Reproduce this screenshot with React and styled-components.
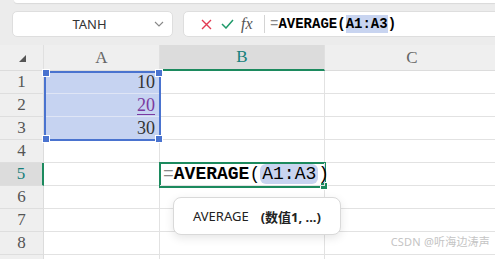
import React from "react";
import styled, { createGlobalStyle } from "styled-components";

const Global = createGlobalStyle`
  html, body {
    margin: 0;
    padding: 0;
    background: #ececec;
    overflow: hidden;
  }
  body {
    font-family: "Noto Sans", "Noto Sans CJK SC", sans-serif;
  }
`;

const Page = styled.div`
  width: 495px;
  height: 259px;
  position: relative;
  overflow: hidden;
  background: #ececec;
`;

const TopPanel = styled.div`
  height: 3px;
  margin-left: 14px;
  background: #fff;
  border-bottom-left-radius: 4px;
  box-shadow: 0 1px 1px rgba(0, 0, 0, 0.08);
`;

const Toolbar = styled.div`
  display: flex;
  gap: 10px;
  padding: 8px 0 0 12px;
  height: 34px;
  box-sizing: border-box;
`;

const NameBox = styled.div`
  width: 161px;
  height: 26px;
  box-sizing: border-box;
  background: #fff;
  border: 1px solid #dedede;
  border-radius: 5px;
  display: flex;
  align-items: center;
  padding: 0 8px 0 0;
  font-size: 13px;
  color: #333;
`;

const NameText = styled.span`
  flex: 1;
  text-align: center;
  padding-left: 12px;
`;

const FormulaBox = styled.div`
  flex: 1;
  height: 26px;
  margin-right: -12px;
  box-sizing: border-box;
  background: #fff;
  border: 1px solid #dedede;
  border-radius: 5px;
  display: flex;
  align-items: center;
  padding-left: 12px;
`;

const IconBtn = styled.span`
  width: 21px;
  display: flex;
  align-items: center;
  justify-content: center;
`;

const Fx = styled.span`
  font-family: "Liberation Serif", serif;
  font-style: italic;
  font-size: 16px;
  color: #555;
  margin-left: 3px;
  width: 20px;
`;

const Separator = styled.span`
  width: 1px;
  height: 18px;
  background: #d4d4d4;
  margin: 0 5px 0 3px;
`;

const FormulaText = styled.span`
  font-family: "Liberation Mono", monospace;
  font-size: 14px;
  font-weight: 700;
  color: #000;
  display: flex;
  align-items: center;
  height: 18px;
`;

const Eq = styled.span`
  color: #888;
  font-weight: 400;
`;

const Fn = styled.span`
  font-weight: 700;
`;

const RefHi = styled.span`
  background: #c8d4f0;
  padding: 1px 0;
`;

const Sheet = styled.div`
  margin-top: 8px;
  display: grid;
  grid-template-columns: 44px 116px 165px 175px;
  grid-template-rows: 26px repeat(9, 23px);
  position: relative;
  background: #fff;
`;

const ColHead = styled.div`
  background: ${(p) => (p.$active ? "#dcdcdc" : "#efefef")};
  color: ${(p) => (p.$active ? "#16807a" : "#666")};
  border-right: 1px solid #e0e0e0;
  border-bottom: ${(p) => (p.$active ? "2px solid #1c8a5e" : "1px solid #dcdcdc")};
  box-sizing: border-box;
  display: flex;
  align-items: center;
  justify-content: center;
  font-family: "Liberation Serif", serif;
  font-size: 17px;
`;

const Corner = styled(ColHead)`
  justify-content: flex-start;
  align-items: flex-start;
  padding: 10px 0 0 19px;
`;

const RowHead = styled.div`
  background: ${(p) => (p.$active ? "#dcdcdc" : "#efefef")};
  color: ${(p) => (p.$active ? "#16807a" : "#555")};
  border-right: ${(p) => (p.$active ? "2px solid #1c8a5e" : "1px solid #dcdcdc")};
  border-bottom: 1px solid #dedede;
  box-sizing: border-box;
  display: flex;
  align-items: center;
  justify-content: center;
  font-family: "Liberation Serif", serif;
  font-size: 17px;
`;

const Cell = styled.div`
  background: ${(p) => (p.$sel ? "#c6d3f1" : "#fff")};
  border-right: 1px solid #e2e2e2;
  border-bottom: 1px solid ${(p) => (p.$sel ? "#dfe5f5" : "#e2e2e2")};
  box-sizing: border-box;
  display: flex;
  align-items: center;
  justify-content: flex-end;
  padding: 0 4px;
  font-family: "Liberation Serif", serif;
  font-size: 18px;
  color: #333;
  overflow: visible;
  white-space: nowrap;
`;

const Linked = styled.span`
  color: #7a3aa0;
  text-decoration: underline;
  text-underline-offset: 3px;
`;

const EditCell = styled(Cell)`
  position: relative;
  z-index: 2;
  background: transparent;
  justify-content: flex-start;
  padding: 0 0 0 3px;
  font-family: "Liberation Mono", monospace;
  font-size: 18px;
  color: #000;
`;

const Pill = styled.span`
  background: #c8d4f0;
  border-radius: 6px;
  padding: 0 2px;
`;

const Caret = styled.span`
  display: inline-block;
  width: 1px;
  height: 21px;
  background: #000;
  vertical-align: middle;
`;

const RangeBox = styled.div`
  position: absolute;
  left: 44px;
  top: 26px;
  width: 117px;
  height: 70px;
  box-sizing: border-box;
  border: 2px solid #4a73cf;
  pointer-events: none;
`;

const Handle = styled.span`
  position: absolute;
  width: 6px;
  height: 6px;
  background: ${(p) => p.$color};
  border: 1px solid #fff;
  ${(p) => (p.$top ? "top: -4px;" : "bottom: -4px;")}
  ${(p) => (p.$left ? "left: -4px;" : "right: -4px;")}
`;

const ActiveBox = styled.div`
  position: absolute;
  z-index: 1;
  left: 159px;
  top: 117px;
  width: 167px;
  height: 26px;
  box-sizing: border-box;
  border: 2px solid #1c8a5e;
  pointer-events: none;
`;

const Tip = styled.div`
  position: absolute;
  z-index: 3;
  left: 173px;
  top: 197px;
  width: 168px;
  height: 38px;
  box-sizing: border-box;
  background: #fff;
  border: 1px solid #d9d9d9;
  border-radius: 8px;
  box-shadow: 0 3px 10px rgba(0, 0, 0, 0.1);
  display: flex;
  align-items: center;
  padding-left: 19px;
  font-size: 13px;
  color: #222;
  gap: 12px;
`;

const TipArgs = styled.b`
  font-weight: 700;
`;

const Watermark = styled.div`
  position: absolute;
  z-index: 3;
  right: 5px;
  bottom: 10px;
  font-size: 11px;
  color: #c4c4c4;
  letter-spacing: 0.2px;
`;

const rows = [
  ["1", "10"],
  ["2", "20"],
  ["3", "30"],
  ["4", ""],
  ["5", ""],
  ["6", ""],
  ["7", ""],
  ["8", ""],
  ["", ""],
];

export default function App() {
  return (
    <Page>
      <Global />
      <TopPanel />
      <Toolbar>
        <NameBox>
          <NameText>TANH</NameText>
          <svg width="10" height="6" viewBox="0 0 10 6">
            <path d="M1 1l4 4 4-4" fill="none" stroke="#888" strokeWidth="1.1" />
          </svg>
        </NameBox>
        <FormulaBox>
          <IconBtn>
            <svg width="11" height="11" viewBox="0 0 11 11">
              <path d="M1 1l9 9M10 1l-9 9" stroke="#e23a52" strokeWidth="1.4" />
            </svg>
          </IconBtn>
          <IconBtn>
            <svg width="13" height="10" viewBox="0 0 13 10">
              <path d="M1 5l4 4 7-8" fill="none" stroke="#1f9a6a" strokeWidth="1.5" />
            </svg>
          </IconBtn>
          <Fx>fx</Fx>
          <Separator />
          <FormulaText>
            <Eq>=</Eq>
            <Fn>AVERAGE</Fn>
            (<RefHi>A1:A3</RefHi>)
          </FormulaText>
        </FormulaBox>
      </Toolbar>
      <Sheet>
        <Corner>
          <svg width="7" height="7" viewBox="0 0 7 7">
            <path d="M7 0v7H0z" fill="#555" />
          </svg>
        </Corner>
        <ColHead>A</ColHead>
        <ColHead $active>B</ColHead>
        <ColHead>C</ColHead>
        {rows.map(([n, v], i) => (
          <React.Fragment key={i}>
            <RowHead $active={n === "5"}>{n}</RowHead>
            <Cell $sel={!!v}>{n === "2" ? <Linked>{v}</Linked> : v}</Cell>
            {n === "5" ? (
              <EditCell>
                <Eq>=</Eq>
                <Fn>AVERAGE</Fn>
                <span>(</span>
                <Pill>A1:A3</Pill>
                <Caret />
                <span>)</span>
              </EditCell>
            ) : (
              <Cell />
            )}
            <Cell />
          </React.Fragment>
        ))}
        <RangeBox>
          <Handle $color="#4a73cf" $top $left />
          <Handle $color="#4a73cf" $top />
          <Handle $color="#4a73cf" $left />
          <Handle $color="#4a73cf" />
        </RangeBox>
        <ActiveBox>
          <Handle $color="#1c8a5e" />
        </ActiveBox>
      </Sheet>
      <Tip>
        <span>AVERAGE</span>
        <TipArgs>(数值1, ...)</TipArgs>
      </Tip>
      <Watermark>CSDN @听海边涛声</Watermark>
    </Page>
  );
}
